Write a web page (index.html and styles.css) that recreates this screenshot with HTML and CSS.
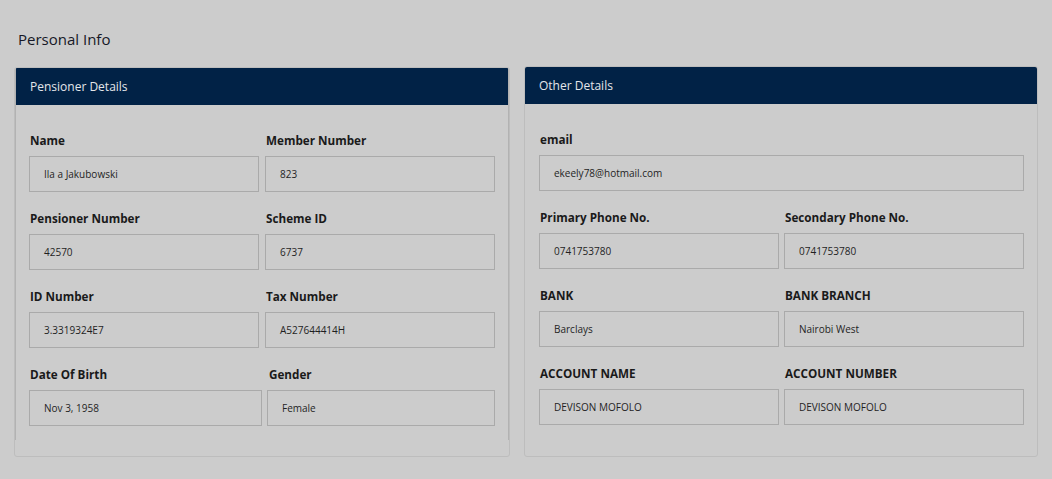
FILE: index.html
```html
<!DOCTYPE html>
<html>
<head>
<meta charset="utf-8">
<link rel="stylesheet" href="styles.css">
</head>
<body>
<div class="page">
  <h1 class="title">Personal Info</h1>
  <div class="cards">
    <div class="card card-left">
      <div class="panel">
        <div class="card-header">Pensioner Details</div>
        <div class="card-body">
          <div class="row">
            <div class="field"><div class="label">Name</div><div class="input">Ila a Jakubowski</div></div>
            <div class="field"><div class="label">Member Number</div><div class="input">823</div></div>
          </div>
          <div class="row">
            <div class="field"><div class="label">Pensioner Number</div><div class="input">42570</div></div>
            <div class="field"><div class="label">Scheme ID</div><div class="input">6737</div></div>
          </div>
          <div class="row">
            <div class="field"><div class="label">ID Number</div><div class="input">3.3319324E7</div></div>
            <div class="field"><div class="label">Tax Number</div><div class="input">A527644414H</div></div>
          </div>
          <div class="row row-last">
            <div class="field"><div class="label">Date Of Birth</div><div class="input">Nov 3, 1958</div></div>
            <div class="field"><div class="label">Gender</div><div class="input">Female</div></div>
          </div>
        </div>
      </div>
    </div>
    <div class="card card-right">
      <div class="card-header">Other Details</div>
      <div class="card-body body-right">
        <div class="row row-single">
          <div class="field"><div class="label">email</div><div class="input">ekeely78@hotmail.com</div></div>
        </div>
        <div class="row">
          <div class="field"><div class="label">Primary Phone No.</div><div class="input">0741753780</div></div>
          <div class="field"><div class="label">Secondary Phone No.</div><div class="input">0741753780</div></div>
        </div>
        <div class="row">
          <div class="field"><div class="label">BANK</div><div class="input">Barclays</div></div>
          <div class="field"><div class="label">BANK BRANCH</div><div class="input">Nairobi West</div></div>
        </div>
        <div class="row">
          <div class="field"><div class="label">ACCOUNT NAME</div><div class="input">DEVISON MOFOLO</div></div>
          <div class="field"><div class="label">ACCOUNT NUMBER</div><div class="input">DEVISON MOFOLO</div></div>
        </div>
      </div>
    </div>
  </div>
</div>
</body>
</html>
```
FILE: styles.css
```css
html, body {
  margin: 0;
  padding: 0;
  background: #cccccc;
  font-family: "Open Sans", "Liberation Sans", sans-serif;
  color: #1e1e1e;
}
.page {
  padding: 29px 14px 0 14px;
}
.title {
  margin: 0 0 17px 4px;
  font-size: 15px;
  font-weight: 500;
  line-height: 20px;
  color: #161826;
}
.cards {
  display: grid;
  grid-template-columns: 496fr 514fr;
  column-gap: 14px;
  align-items: start;
}
.card {
  border: 1px solid #bdbdbd;
  border-radius: 3px;
  box-sizing: border-box;
  overflow: hidden;
}
.card-left {
  margin-top: 1px;
  height: 390px;
}
.card-right {
  height: 391px;
}
.panel {
  border-left: 1px solid #b2b2b2;
  border-right: 1px solid #b2b2b2;
}
.card-header {
  background: #012246;
  color: #e4e6ea;
  font-size: 12px;
  height: 37px;
  line-height: 37px;
  padding-left: 14px;
}
.card-body {
  padding: 26px 13px 14px 13px;
}
.body-right {
  padding: 26px 13px 14px 14px;
}
.row {
  display: grid;
  grid-template-columns: 1fr 1fr;
  column-gap: 6px;
  margin-bottom: 17px;
}
.body-right .row {
  column-gap: 5px;
}
.row:last-child {
  margin-bottom: 0;
}
.row-last {
  grid-template-columns: 234fr 229fr;
  column-gap: 5px;
}
.row-last .field:last-child .label {
  padding-left: 2px;
}
.row-single {
  grid-template-columns: 1fr;
}
.label {
  font-size: 11.7px;
  font-weight: 700;
  line-height: 18px;
  margin-bottom: 7px;
  padding-left: 1px;
  color: #1a1a1a;
}
.input {
  height: 36px;
  box-sizing: border-box;
  border: 1px solid #aaaaaa;
  font-size: 10px;
  line-height: 34px;
  padding-left: 14px;
  color: #1f1f1f;
}
```
